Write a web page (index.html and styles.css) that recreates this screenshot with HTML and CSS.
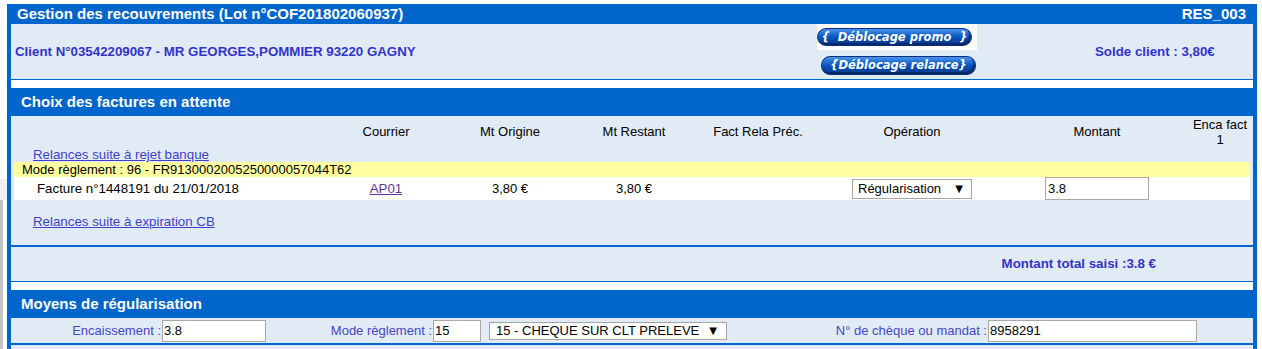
FILE: index.html
```html
<!DOCTYPE html>
<html lang="fr">
  <head>
    <meta charset="UTF-8" />
    <meta name="viewport" content="width=device-width, initial-scale=1.0" />
    <title>Gestion des recouvrements</title>
    <link rel="stylesheet" href="styles.css">
  </head>
  <body>
    <div class="frame">

      <div class="panel">
        <div class="bar bar-small">
          <span>Gestion des recouvrements (Lot n°COF201802060937)</span>
          <span>RES_003</span>
        </div>
        <div class="client">
          <div class="client-name">Client N°03542209067 - MR GEORGES,POMMIER 93220 GAGNY</div>
          <div class="actions">
            <span class="btn-wrap"><a class="btn" href="#">{&nbsp; Déblocage promo &nbsp;}</a></span>
            <a class="btn btn-2" href="#">{Déblocage relance}</a>
          </div>
          <div class="solde">Solde client : 3,80€</div>
        </div>
      </div>

      <div class="panel">
        <div class="bar">
          <span>Choix des factures en attente</span>
        </div>
        <div class="body factures">
          <div class="row head">
            <div></div>
            <div>Courrier</div>
            <div>Mt Origine</div>
            <div>Mt Restant</div>
            <div>Fact Rela Préc.</div>
            <div>Opération</div>
            <div>Montant</div>
            <div class="two-lines">Enca fact<br>1</div>
          </div>
          <div class="group-link"><a href="#">Relances suite à rejet banque</a></div>
          <div class="mode">Mode règlement : 96 - FR9130002005250000057044T62</div>
          <div class="row facture">
            <div class="fac-label">Facture n°1448191 du 21/01/2018</div>
            <div><a class="visited" href="#">AP01</a></div>
            <div>3,80 €</div>
            <div>3,80 €</div>
            <div></div>
            <div><span class="select op-select">Régularisation <span class="arrow">▼</span></span></div>
            <div><input class="field montant" type="text" value="3.8"></div>
            <div></div>
          </div>
          <div class="group-link group-link-2"><a href="#">Relances suite à expiration CB</a></div>
        </div>
        <div class="total">Montant total saisi :3.8 €</div>
      </div>

      <div class="panel">
        <div class="bar">
          <span>Moyens de régularisation</span>
        </div>
        <div class="body moyens">
          <label class="lbl">Encaissement :</label>
          <div><input class="field encaissement" type="text" value="3.8"></div>
          <label class="lbl">Mode règlement :</label>
          <div><input class="field mode-code" type="text" value="15"></div>
          <div><span class="select mode-select">15 - CHEQUE SUR CLT PRELEVE <span class="arrow">▼</span></span></div>
          <label class="lbl">N° de chèque ou mandat :</label>
          <div><input class="field cheque" type="text" value="8958291"></div>
        </div>
        <div class="body-rest"></div>
      </div>

    </div>
  </body>
</html>
```

FILE: styles.css
```css
body {
  margin: 4px 0 0 7px;
  font-family: "Liberation Sans", Arial, sans-serif;
  font-size: 13px;
  color: #000;
  background: #fff;
}
/* left edge of the parent frame */
body::before {
  content: "";
  position: absolute;
  left: 0;
  top: 179px;
  width: 7px;
  height: 21px;
  background: #f0f0f0;
}
body::after {
  content: "";
  position: absolute;
  left: 0;
  top: 200px;
  width: 3px;
  height: 149px;
  background: #c4c4c4;
}
a {
  color: #3f3fcc;
  font-size: 13.3px;
}
a.visited {
  color: #663399;
}
.frame {
  width: 1242px;
  border-left: 4px solid #0066cc;
  border-right: 4px solid #0066cc;
  background: #fff;
}
.panel + .panel {
  margin-top: 8px;
}
.bar {
  display: flex;
  justify-content: space-between;
  height: 28px;
  line-height: 28px;
  padding: 0 7px 0 10px;
  background: #0066cc;
  color: #fff;
  font-size: 15px;
  font-weight: bold;
}
.bar-small {
  height: 20px;
  line-height: 20px;
  padding-left: 6px;
}
.body {
  background: #e1ebf5;
  border-bottom: 2px solid #0066cc;
}

/* client block */
.client {
  display: grid;
  grid-template-columns: 806px 172px 1fr;
  align-items: center;
  height: 55px;
  background: #e1ebf5;
  border-bottom: 1px solid #0066cc;
}
.client-name,
.solde,
.total {
  color: #3333cc;
  font-size: 13.3px;
  font-weight: bold;
}
.client-name {
  padding-left: 4px;
}
.solde {
  padding-left: 106px;
}
.actions {
  align-self: start;
  display: flex;
  flex-direction: column;
  align-items: flex-start;
}
.btn-wrap {
  display: block;
  background: #fff;
  padding: 4px 5px 4px 0;
}
.btn {
  display: block;
  box-sizing: border-box;
  width: 155px;
  height: 18px;
  line-height: 16px;
  border: 1px solid #0b2f78;
  border-radius: 9px;
  background: linear-gradient(#4a95ec, #0d5ac4 45%, #0646a8 70%, #0a3a8c);
  box-shadow: inset -2px -2px 0 rgba(0, 20, 70, 0.5);
  color: #fff;
  font-family: "DejaVu Sans", Verdana, sans-serif;
  font-size: 11.5px;
  font-style: italic;
  font-weight: bold;
  text-align: center;
  text-decoration: none;
  white-space: nowrap;
}
.btn-2 {
  height: 19px;
  line-height: 17px;
  margin: 6px 0 0 4px;
}

/* factures */
.factures {
  padding-bottom: 16px;
}
.row {
  display: grid;
  grid-template-columns: 310px 124px 124px 124px 124px 184px 186px 60px;
  align-items: center;
  margin: 0 3px;
  text-align: center;
}
.head {
  height: 31px;
}
.two-lines {
  line-height: 15px;
}
.group-link {
  height: 15px;
  line-height: 15px;
  padding-left: 22px;
}
.group-link-2 {
  margin-top: 14px;
}
.mode {
  height: 15px;
  line-height: 15px;
  margin: 0 3px;
  padding-left: 8px;
  background: #ffffa0;
}
.facture {
  height: 23px;
  background: #fff;
}
.fac-label {
  text-align: left;
  padding-left: 23px;
  font-size: 13.3px;
}
.select {
  display: inline-flex;
  justify-content: space-between;
  align-items: center;
  box-sizing: border-box;
  border: 1px solid #a6a6a6;
  background: #fff;
  padding: 0 8px 0 5px;
  text-align: left;
  vertical-align: middle;
}
.arrow {
  font-family: "DejaVu Sans", sans-serif;
  font-size: 10px;
}
.op-select {
  width: 120px;
  height: 20px;
}
.field {
  box-sizing: border-box;
  height: 22px;
  margin: 0;
  padding: 0 1px;
  border: 1px solid #a9a9a9;
  font-family: "Liberation Sans", Arial, sans-serif;
  font-size: 13px;
  color: #000;
  background: #fff;
  vertical-align: middle;
}
.montant {
  width: 104px;
  height: 23px;
  padding-left: 2px;
}
.total {
  height: 34px;
  line-height: 34px;
  padding-right: 97px;
  text-align: right;
  background: #e1ebf5;
  border-bottom: 1px solid #0066cc;
}

/* moyens de regularisation */
.moyens {
  display: grid;
  grid-template-columns: 150px 161px 110px 57px 300px 198px 1fr;
  align-items: center;
  height: 25px;
}
.lbl {
  text-align: right;
  color: #4646c8;
}
.encaissement {
  width: 104px;
  margin-left: 1px;
}
.mode-code {
  width: 48px;
  margin-left: 1px;
}
.mode-select {
  width: 238px;
  height: 18px;
  padding: 0 9px 0 6px;
}
.cheque {
  width: 209px;
  margin-left: 1px;
}
.body-rest {
  height: 8px;
  background: #e1ebf5;
}
```
